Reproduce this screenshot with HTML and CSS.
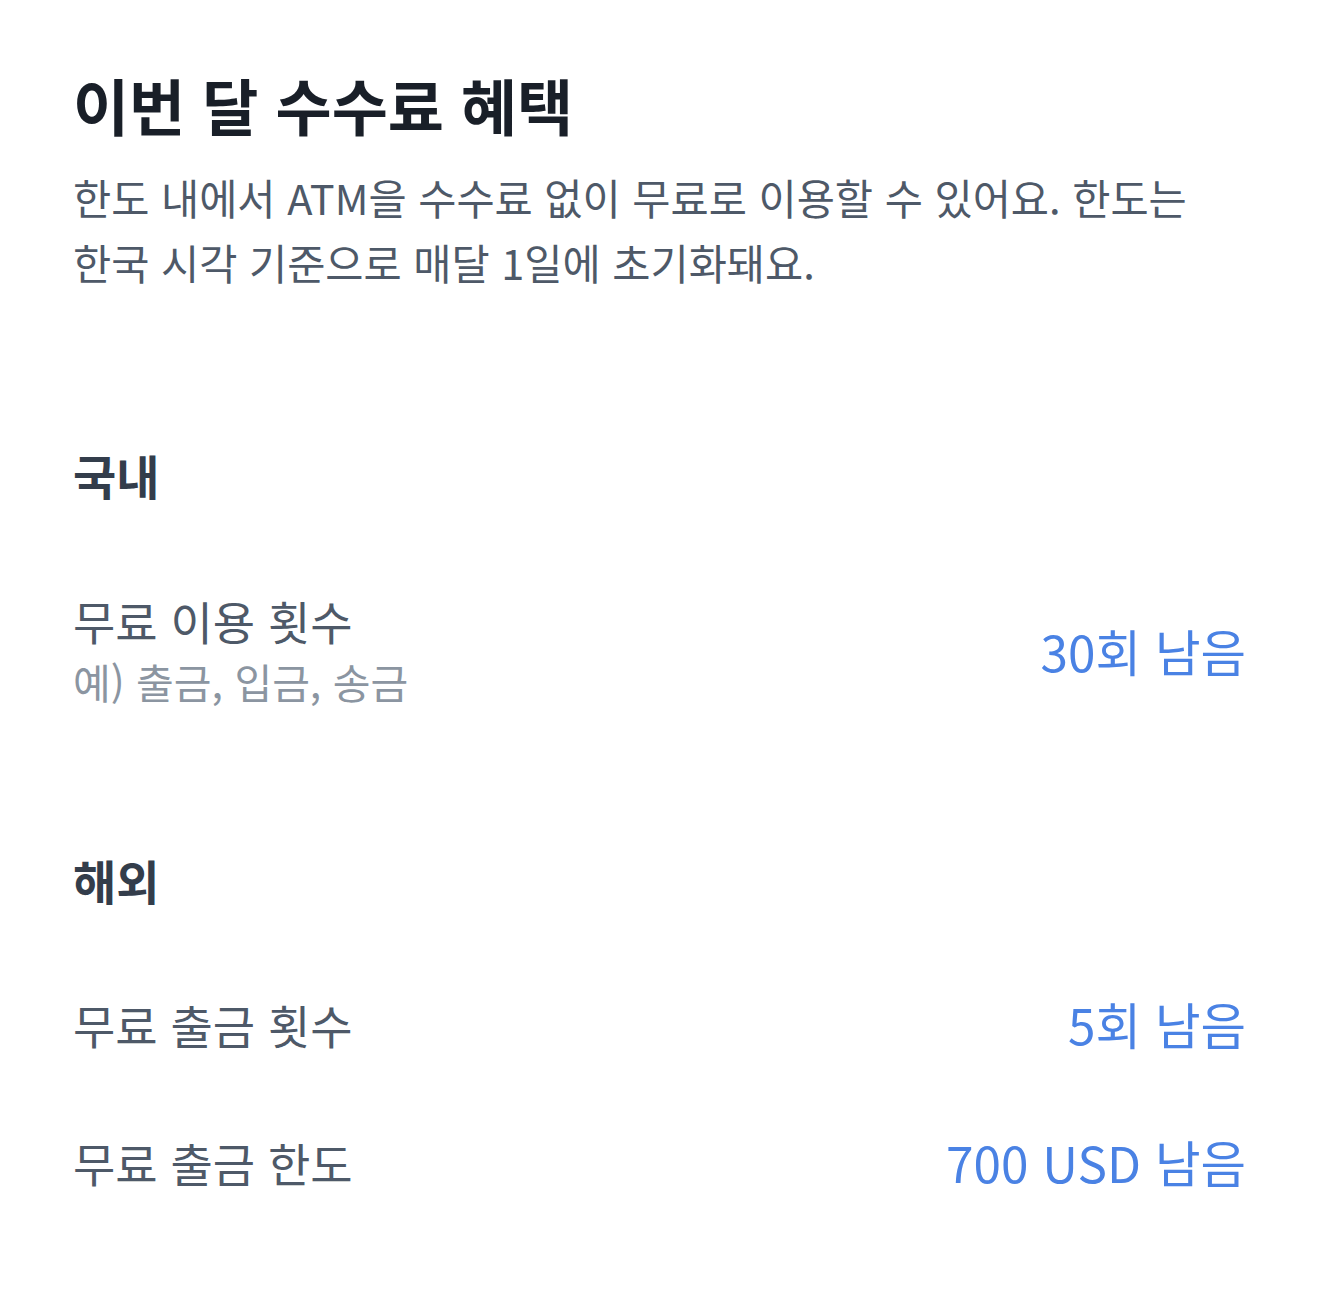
FILE: index.html
```html
<!DOCTYPE html>
<html lang="ko">
<head>
  <meta charset="UTF-8">
  <meta name="viewport" content="width=device-width, initial-scale=1.0">
  <title>이번 달 수수료 혜택</title>
  <link rel="stylesheet" href="styles.css">
</head>
<body>
  <div class="page">
    <h1 class="title">이번 달 수수료 혜택</h1>
    <p class="desc">한도 내에서 ATM을 수수료 없이 무료로 이용할 수 있어요. 한도는 한국 시각 기준으로 매달 1일에 초기화돼요.</p>

    <section class="group">
      <h2 class="group-title">국내</h2>
      <div class="row">
        <div class="row-label">
          <div class="label">무료 이용 횟수</div>
          <div class="hint">예) 출금, 입금, 송금</div>
        </div>
        <div class="value">30회 남음</div>
      </div>
    </section>

    <section class="group">
      <h2 class="group-title">해외</h2>
      <div class="row">
        <div class="label">무료 출금 횟수</div>
        <div class="value">5회 남음</div>
      </div>
      <div class="row">
        <div class="label">무료 출금 한도</div>
        <div class="value">700 USD 남음</div>
      </div>
    </section>
  </div>
</body>
</html>
```

FILE: styles.css
```css
body {
  margin: 0;
  background: #fff;
  font-family: "Noto Sans CJK KR", "Noto Sans", sans-serif;
  word-break: keep-all;
}
.page {
  padding: 67px 74px 60px 73px;
}
.title {
  margin: 0;
  font-size: 61px;
  font-weight: 700;
  line-height: 76px;
  color: #191f28;
}
.desc {
  margin: 22px 0 0;
  font-size: 41.5px;
  line-height: 65px;
  color: #4e5968;
}
.group {
  margin-top: 150px;
}
.group + .group {
  margin-top: 138px;
}
.group-title {
  margin: 0;
  font-size: 47px;
  font-weight: 700;
  line-height: 60px;
  color: #333d4b;
}
.row {
  display: flex;
  align-items: center;
  justify-content: space-between;
  margin-top: 85px;
}
.group + .group .row {
  margin-top: 84px;
}
.group + .group .row + .row {
  margin-top: 78px;
}
.label {
  font-size: 46px;
  line-height: 60px;
  color: #4e5968;
}
.hint {
  font-size: 41px;
  line-height: 62px;
  color: #8b95a1;
}
.value {
  font-size: 49.5px;
  line-height: 60px;
  color: #4a82e4;
}
```
